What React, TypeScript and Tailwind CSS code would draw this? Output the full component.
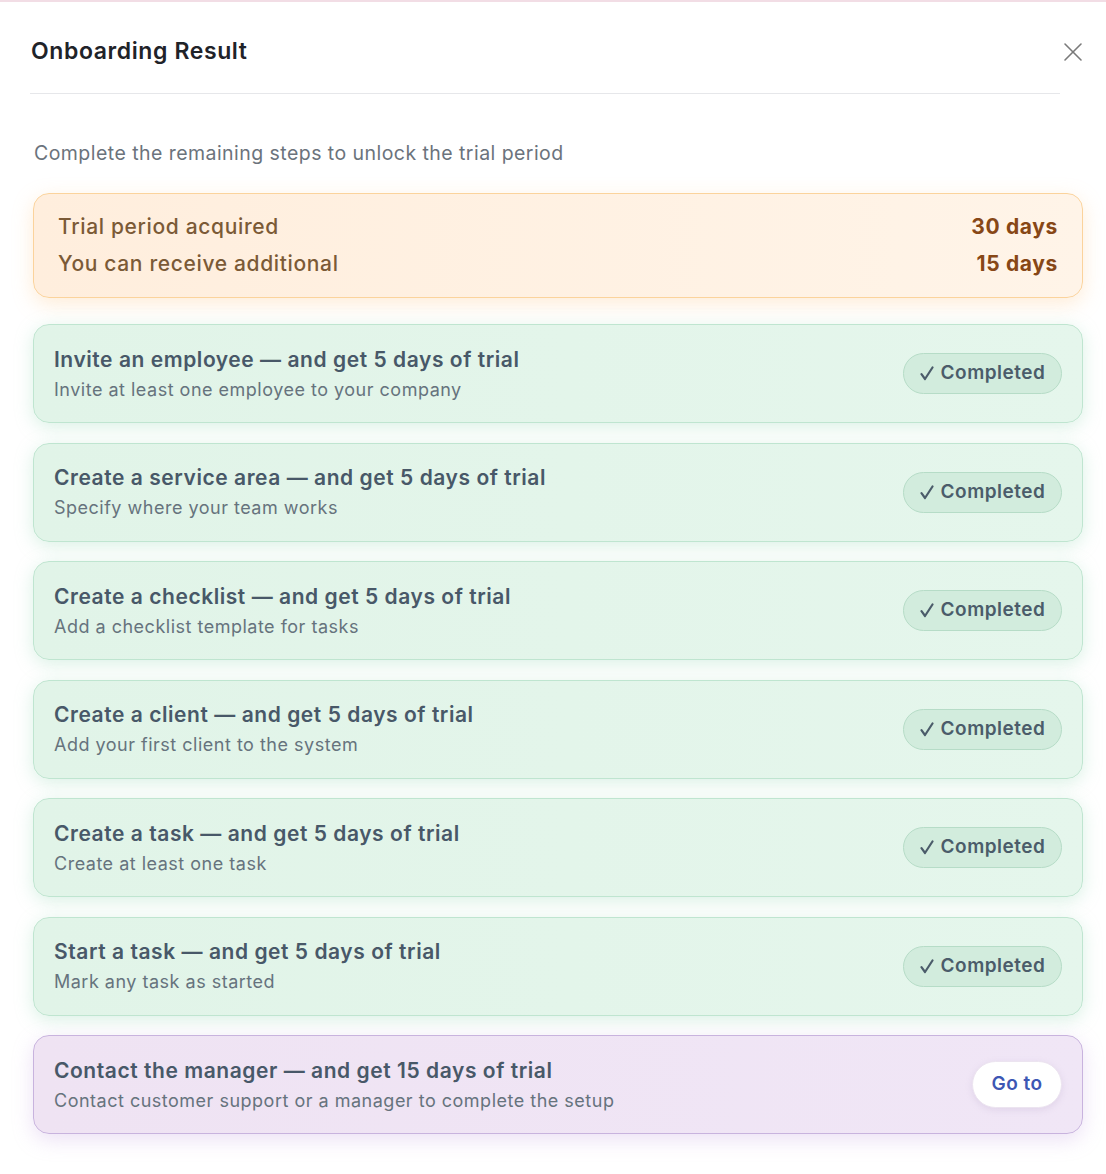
import React from 'react'
import { X } from 'lucide-react'

type Step = {
    title: string;
    description: string;
    done: boolean;
}

const steps: Step[] = [
    { title: 'Invite an employee — and get 5 days of trial', description: 'Invite at least one employee to your company', done: true },
    { title: 'Create a service area — and get 5 days of trial', description: 'Specify where your team works', done: true },
    { title: 'Create a checklist — and get 5 days of trial', description: 'Add a checklist template for tasks', done: true },
    { title: 'Create a client — and get 5 days of trial', description: 'Add your first client to the system', done: true },
    { title: 'Create a task — and get 5 days of trial', description: 'Create at least one task', done: true },
    { title: 'Start a task — and get 5 days of trial', description: 'Mark any task as started', done: true },
    { title: 'Contact the manager — and get 15 days of trial', description: 'Contact customer support or a manager to complete the setup', done: false },
]

// Hand-drawn tick, same shape as the "✓" glyph in the badge
const Tick = () => (
    <svg width="14" height="15" viewBox="0 0 14 15" fill="none" className="flex-shrink-0">
        <path d="M1.5 8.2 L5 13 L12.5 1.5" stroke="currentColor" strokeWidth="2.2" strokeLinecap="round" strokeLinejoin="round" />
    </svg>
)

const StepCard = ({ step }: { step: Step }) => {
    const cardClass = step.done
        ? 'border-[#bfe5d0] bg-gradient-to-r from-[#e1f4e8] to-[#e5f6ec] shadow-[0_4px_18px_rgba(150,215,180,0.35)]'
        : 'border-[#c8b3de] bg-gradient-to-r from-[#efe3f3] to-[#f0e6f6] shadow-[0_6px_20px_rgba(200,170,225,0.35)]'

    return (
        <div className={`flex items-center justify-between h-[99px] px-5 rounded-2xl border ${cardClass}`}>
            {/* Text */}
            <div className="flex flex-col gap-[4px]">
                <div className="text-[21px] leading-[28px] font-semibold text-[#485868] tracking-[0.55px]">{step.title}</div>
                <div className="text-[18px] leading-[24px] text-[#66737d] tracking-[0.5px]">{step.description}</div>
            </div>

            {/* Status */}
            {step.done ? (
                <div className="flex items-center justify-center gap-[7px] w-[159px] h-[41px] rounded-full border border-[#b6dcc7] bg-[#d2ecdd] text-[19px] font-semibold text-[#4b5c6a] tracking-[0.5px]">
                    <Tick />
                    <span>Completed</span>
                </div>
            ) : (
                <button className="flex items-center justify-center w-[90px] h-[47px] rounded-full bg-white border border-[#ece4f0] shadow-[0_2px_6px_rgba(180,160,200,0.25)] text-[19px] font-semibold text-[#3d57b4] tracking-[0.5px]">
                    Go to
                </button>
            )}
        </div>
    )
}

const App = () => {
    return (
        <div className="min-h-screen bg-white border-t-2 border-[#f2dde5] font-['Inter','Liberation_Sans',sans-serif]">
            {/* Header */}
            <div className="flex items-center justify-between h-[91px] pl-[31px] pr-[17px] pt-[8px]">
                <h1 className="text-[23px] font-semibold text-[#1f2329] tracking-[0.6px]">Onboarding Result</h1>
                <button aria-label="Close" className="text-[#7a7a7a]">
                    <X size={32} strokeWidth={1.2} />
                </button>
            </div>
            <div className="ml-[30px] w-[1030px] h-px bg-[#e6e7ea]" />

            {/* Body */}
            <div className="pl-[33px] pr-[23px] pb-10">
                <p className="mt-[45px] pl-[1px] text-[19.5px] leading-[28px] text-[#6b737c] tracking-[0.45px]">
                    Complete the remaining steps to unlock the trial period
                </p>

                {/* Trial summary */}
                <div className="mt-[26px] flex flex-col gap-[7px] py-[18px] px-6 rounded-2xl border border-[#fbd39c] bg-gradient-to-r from-[#ffeedd] to-[#fff4e8] shadow-[0_6px_20px_rgba(253,200,140,0.35)]">
                    <div className="flex justify-between leading-[30px] tracking-[0.65px]">
                        <span className="text-[21px] font-medium text-[#7b5a36]">Trial period acquired</span>
                        <span className="text-[21px] font-bold text-[#874716]">30 days</span>
                    </div>
                    <div className="flex justify-between leading-[30px] tracking-[0.65px]">
                        <span className="text-[21px] font-medium text-[#7b5a36]">You can receive additional</span>
                        <span className="text-[21px] font-bold text-[#874716]">15 days</span>
                    </div>
                </div>

                {/* Steps */}
                <div className="mt-[26px] flex flex-col gap-[19.5px]">
                    {steps.map((step) => (
                        <StepCard key={step.title} step={step} />
                    ))}
                </div>
            </div>
        </div>
    )
}

export default App
